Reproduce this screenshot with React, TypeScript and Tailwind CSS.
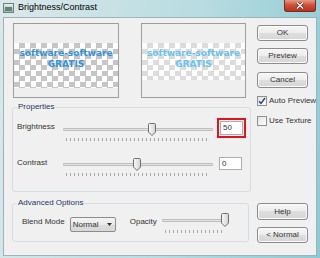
import React from 'react';

function Thumb({ h = 13 }: { h?: number }) {
  return (
    <svg width="8" height={h} viewBox={`0 0 8 ${h}`}>
      <defs>
        <linearGradient id="tg" x1="0" y1="0" x2="1" y2="0">
          <stop offset="0" stopColor="#fbfbfb" />
          <stop offset="1" stopColor="#d2d2d2" />
        </linearGradient>
      </defs>
      <path
        d={`M0.5 1.5 Q0.5 0.5 1.5 0.5 H6.5 Q7.5 0.5 7.5 1.5 V${h - 4} L4 ${h - 0.5} L0.5 ${h - 4} Z`}
        fill="url(#tg)"
        stroke="#6f6f6f"
      />
    </svg>
  );
}

function Slider({ className, pos, thumbH = 13, trackTop = 5, tickTop = 15 }: { className: string; pos: number; thumbH?: number; trackTop?: number; tickTop?: number }) {
  return (
    <div className={`relative ${className}`}>
      <div className="absolute left-0 right-0 h-[3px] rounded-[1px] border border-[#bdbdbd] bg-[#e4e4e4]" style={{ top: trackTop }} />
      <div className="absolute left-[3px] right-[3px] h-[3px] bg-[repeating-linear-gradient(to_right,#a9a9a9_0_1px,transparent_1px_4px)]" style={{ top: tickTop }} />
      <div className="absolute top-0 flex" style={{ left: pos }}>
        <Thumb h={thumbH} />
      </div>
    </div>
  );
}

function Button({ label, h = 16 }: { label: string; h?: number }) {
  return (
    <div
      className="w-[51px] flex items-center justify-center rounded-[3px] border border-[#8c8c8c] bg-[linear-gradient(#f6f6f6,#ececec_50%,#dedede_50%,#d6d6d6)] text-[8px] leading-[10px] text-[#333] shadow-[inset_0_0_0_1px_#fbfbfb]"
      style={{ height: h }}
    >
      {label}
    </div>
  );
}

function Check({ checked, label }: { checked?: boolean; label: string }) {
  return (
    <div className="flex items-center gap-[2px] h-[10px] whitespace-nowrap">
      <div className="w-[10px] h-[10px] shrink-0 border border-[#8e8f8f] bg-[linear-gradient(135deg,#e0e0e0,#fff)] flex items-center justify-center">
        {checked && (
          <svg width="8" height="8" viewBox="0 0 8 8">
            <path d="M1 4.2 L3 6.5 L7 1" fill="none" stroke="#23428a" strokeWidth="1.4" />
          </svg>
        )}
      </div>
      <span className="text-[8px] leading-[10px] text-[#333]">{label}</span>
    </div>
  );
}

function Preview({ light, checkerH, className }: { light?: boolean; checkerH: string; className: string }) {
  return (
    <div className={`h-[75px] border border-[#9d9d9d] bg-[#efefef] pt-[19px] ${className}`}>
      <div
        className={`${checkerH} flex flex-col items-center pt-[5px] bg-[length:11px_11px] ${
          light
            ? 'bg-[conic-gradient(#dcdcdc_25%,#fff_0_50%,#dcdcdc_0_75%,#fff_0)] text-[#68c3f4]'
            : 'bg-[conic-gradient(#c6c6c6_25%,#fff_0_50%,#c6c6c6_0_75%,#fff_0)] text-[#3592e2]'
        } font-['DejaVu_Sans',sans-serif] font-bold text-[9px] leading-[11px] whitespace-nowrap`}
      >
        <span>software-software</span>
        <span>GRATIS</span>
      </div>
    </div>
  );
}

export default function App() {
  return (
    <div className="w-[320px] h-[258px] flex flex-col bg-[linear-gradient(100deg,#dce8ea,#b8dce1_55%,#8ccad2)] font-['Liberation_Sans',Arial,sans-serif] text-[#222]">
      {/* Title bar */}
      <div className="h-[17px] flex items-start pl-[3px]">
        <div className="mt-[3px] w-[11px] h-[10px] border border-[#6d7f86] bg-[linear-gradient(#e9eef0,#9fb4bc)] flex items-end justify-center">
          <div className="w-[7px] h-[4px] mb-[1px] bg-[#5b8a6b]" />
        </div>
        <span className="ml-[4px] mt-[2px] text-[9px] leading-[11px] text-black">Brightness/Contrast</span>
        <div className="ml-auto mr-[4px] w-[32px] h-[12px] rounded-b-[3px] border border-t-0 border-[#7a2c22] bg-[linear-gradient(#e69a8a,#d0523a_45%,#b8301c)] flex items-center justify-center">
          <svg width="8" height="7" viewBox="0 0 8 7">
            <path d="M1 0.5 L7 6.5 M7 0.5 L1 6.5" stroke="#5a1a10" strokeWidth="2.6" />
            <path d="M1 0.5 L7 6.5 M7 0.5 L1 6.5" stroke="#fff" strokeWidth="1.5" />
          </svg>
        </div>
      </div>

      {/* Client area */}
      <div className="flex-1 mx-[3px] mb-[2px] border border-[#9fb4b9] bg-[#f0f0f0] flex pl-[8px] pt-[5px]">
        {/* Left column */}
        <div className="w-[237px] flex flex-col">
          <div className="flex pl-[1px] gap-[22px]">
            <Preview className="w-[106px]" checkerH="h-[45px]" />
            <Preview className="w-[105px]" checkerH="h-[37px]" light />
          </div>

          <fieldset className="mt-[4px] border border-[#d5dde2] rounded-[3px] px-[4px] pb-[15px]">
            <legend className="px-[1px] text-[8px] leading-[10px] text-[#1e3563]">Properties</legend>
            <div className="flex items-start mt-[6px]">
              <span className="w-[46px] mt-[4px] text-[8px] leading-[10px] text-[#333]">Brightness</span>
              <Slider className="w-[150px] h-[18px] mt-[5px]" pos={85} />
              <div className="ml-[4px] border-2 border-[#e0141c] p-[1px]">
                <div className="w-[23px] h-[14px] border border-[#abadb3] bg-white pl-[2px] text-[8px] leading-[12px] text-[#333]">50</div>
              </div>
            </div>
            <div className="flex items-start mt-[16px]">
              <span className="w-[46px] mt-[1px] text-[8px] leading-[10px] text-[#333]">Contrast</span>
              <Slider className="w-[150px] h-[18px] mt-[1px]" pos={70} />
              <div className="ml-[6px] w-[23px] h-[13px] border border-[#abadb3] bg-white pl-[2px] text-[8px] leading-[11px] text-[#333]">0</div>
            </div>
          </fieldset>

          <fieldset className="mt-[6px] border border-[#d5dde2] rounded-[3px] px-[4px] pb-[7px]">
            <legend className="px-[1px] text-[8px] leading-[10px] text-[#1e3563]">Advanced Options</legend>
            <div className="flex items-start mt-[5px]">
              <span className="ml-[5px] mt-[4px] text-[8px] leading-[10px] text-[#333]">Blend Mode</span>
              <div className="ml-[5px] mt-[4px] w-[46px] h-[15px] rounded-[2px] border border-[#8c8c8c] bg-[linear-gradient(#f4f4f4,#e9e9e9_50%,#dcdcdc_50%,#d8d8d8)] flex items-center pl-[2px] pr-[3px]">
                <span className="flex-1 text-[8px] leading-[10px] text-[#333]">Normal</span>
                <svg width="5" height="3" viewBox="0 0 5 3">
                  <path d="M0 0 H5 L2.5 3 Z" fill="#333" />
                </svg>
              </div>
              <span className="ml-[14px] mt-[4px] text-[8px] leading-[10px] text-[#333]">Opacity</span>
              <Slider className="ml-[5px] w-[66px] h-[21px]" pos={59} thumbH={14} trackTop={6} tickTop={17} />
            </div>
          </fieldset>
        </div>

        {/* Right column */}
        <div className="ml-[8px] w-[51px] flex flex-col pb-[12px]">
          <div className="mt-[2px]">
            <Button label="OK" />
          </div>
          <div className="mt-[7px]">
            <Button label="Preview" />
          </div>
          <div className="mt-[8px]">
            <Button label="Cancel" />
          </div>
          <div className="mt-[8px]">
            <Check checked label="Auto Preview" />
          </div>
          <div className="mt-[10px]">
            <Check label="Use Texture" />
          </div>
          <div className="mt-auto">
            <Button label="Help" h={17} />
          </div>
          <div className="mt-[7px]">
            <Button label="< Normal" />
          </div>
        </div>
      </div>
    </div>
  );
}
